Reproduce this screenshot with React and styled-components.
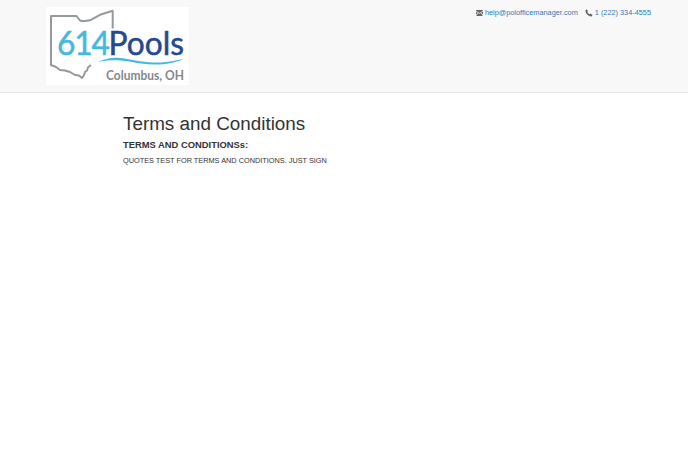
import React from "react";
import styled, { createGlobalStyle } from "styled-components";

const Global = createGlobalStyle`
  html, body { margin: 0; padding: 0; background: #fff; }
  body { font-family: "Liberation Sans", Arial, sans-serif; font-size: 7.33px; color: #333; }
`;
const Page = styled.div`min-height: 465px; background: #fff;`;
const Header = styled.header`
  height: 92px; display: flex; justify-content: space-between; align-items: flex-start;
  background: #f8f8f8; border-bottom: 1px solid #e7e7e7; padding: 0 37px 0 46px;
`;
const Logo = styled.svg`display: block; margin-top: 7px; background: #fff;`;
const Contact = styled.div`display: flex; gap: 7px; margin-top: 7px; line-height: 11px;`;
const ContactItem = styled.span`display: inline-flex; align-items: center; gap: 2px; white-space: nowrap;`;
const ContactLink = styled.a`color: #337ab7; text-decoration: none; font-size: 7.33px;`;
const Main = styled.main`padding: 20px 0 0 123px;`;
const Title = styled.h1`margin: 0; font-size: 18.85px; font-weight: 500; line-height: 22px; color: #333;`;
const Subtitle = styled.h4`margin: 4px 0 0; font-size: 9.4px; font-weight: 700; line-height: 12px; color: #333;`;
const Body = styled.p`margin: 4px 0 0; font-size: 7.33px; line-height: 12px; color: #333;`;

const Mail = () => (
  <svg width="7" height="6" viewBox="0 0 8 7"><path fill="#666" d="M0 0h8v.8L4 3.400 0 .8zM0 1.700l2.200 1.500L0 5.600zM8 1.700v3.900L5.800 3.200zM2.800 3.600 4 4.400l1.200-.8L8 7H0z" /></svg>
);
const Phone = () => (
  <svg width="8" height="8" viewBox="0 0 8 8"><path fill="#666" d="M1.600.2 3 1.900 2.300 3c.5.9 1.200 1.600 2.200 2.200l1.100-.8L7.600 6 6.500 7.400C3.600 7.600.4 4.400.4 1.400z" /></svg>
);

export default function App() {
  return (
    <Page>
      <Global />
      <Header>
        <Logo width="143" height="78" viewBox="0 0 143 78">
          <g fill="none" stroke="#96999c" strokeWidth="2" strokeLinejoin="round">
            <path d="M5 27V9h25.500l3.500 4.500 3 .8 7-1 10-5.500 12.700-4.100V21.500" />
            <path d="M5 27v31l5 2 4 3 5 .5 5 1.500 5 3 4 .5 3 2.500 2-3 1-3 2-1.500 1-3 3-2.500" />
          </g>
          <text x="11" y="48" fontFamily="Lato, sans-serif" fontSize="32" strokeWidth=".5" textLength="127" lengthAdjust="spacingAndGlyphs">
            <tspan fill="#45b8dc" stroke="#45b8dc" letterSpacing="-1.2">614</tspan>
            <tspan fill="#25498f" stroke="#25498f">Pools</tspan>
          </text>
          <path d="M52 54.700C60 51.500 66 50.500 71 50.800c8 .5 15 2.500 23 3.400 8 1 16 1.600 23 1.100 8-.6 15-2 21-3.500-6 3-13 4.800-21 5.500-8 .6-16 .2-24-1-8-1.400-14-2.700-21-3-6-.1-12 .2-20 1.400z" fill="#45b8dc" />
          <text x="60" y="73" fontFamily="Lato, sans-serif" fontSize="12.4" fontWeight="700" fill="#85888b" textLength="78" lengthAdjust="spacingAndGlyphs">Columbus, OH</text>
        </Logo>
        <Contact>
          <ContactItem><Mail /><ContactLink>help@polofficemanager.com</ContactLink></ContactItem>
          <ContactItem><Phone /><ContactLink>1 (222) 334-4555</ContactLink></ContactItem>
        </Contact>
      </Header>
      <Main>
        <Title>Terms and Conditions</Title>
        <Subtitle>TERMS AND CONDITIONSs:</Subtitle>
        <Body>QUOTES TEST FOR TERMS AND CONDITIONS. JUST SIGN</Body>
      </Main>
    </Page>
  );
}
